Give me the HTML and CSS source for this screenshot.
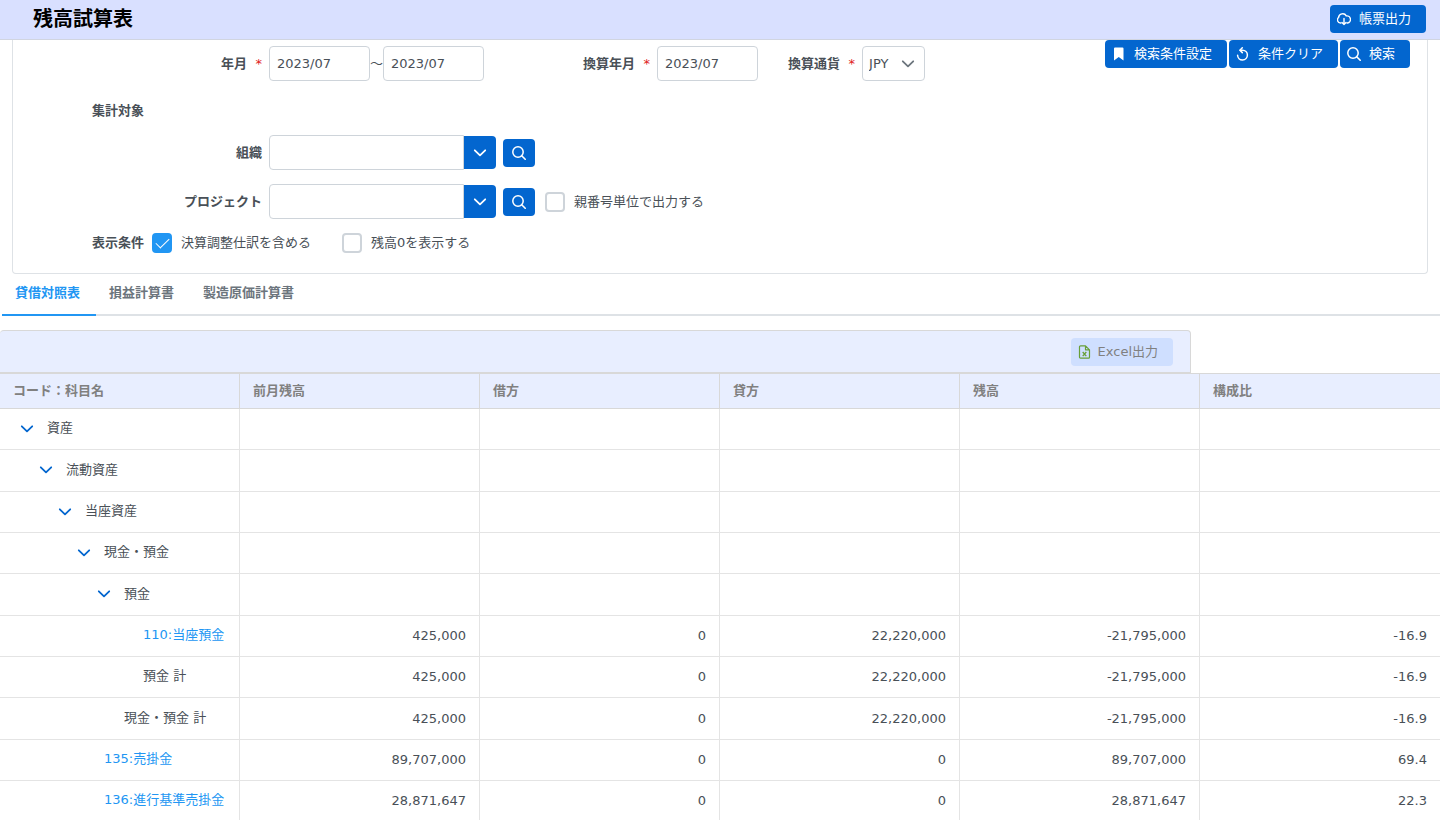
FILE: index.html
```html
<!DOCTYPE html>
<html lang="ja">
<head>
<meta charset="utf-8">
<title>残高試算表</title>
<link rel="stylesheet" href="styles.css">
</head>
<body>
<svg class="sprite" aria-hidden="true">
  <symbol id="chevron" viewBox="0 0 14 14"><path d="M1.800 4.300 7 9.300l5.200-5" fill="none" stroke="currentColor" stroke-width="1.800" stroke-linecap="round" stroke-linejoin="round"/></symbol>
  <symbol id="search" viewBox="0 0 14 14"><circle cx="6" cy="6" r="5.200" fill="none" stroke="currentColor" stroke-width="1.500"/><path d="m9.700 9.700 3.500 3.500" stroke="currentColor" stroke-width="1.600" stroke-linecap="round"/></symbol>
  <symbol id="bookmark" viewBox="0 0 14 14"><path d="M3 .5h7.500a1 1 0 0 1 1 1v12L6.750 10 2 13.500v-12a1 1 0 0 1 1-1z" fill="currentColor"/></symbol>
  <symbol id="undo" viewBox="0 0 14 14"><path d="M4.200 3.200H6.500a4.900 4.900 0 1 1-4.900 5" fill="none" stroke="currentColor" stroke-width="1.500" stroke-linecap="round"/><path d="M6.300 .8 3.900 3.200 6.300 5.600" fill="none" stroke="currentColor" stroke-width="1.500" stroke-linecap="round" stroke-linejoin="round"/></symbol>
  <symbol id="cloud" viewBox="0 0 14 14"><path d="M4 11H3.500A3.100 3.100 0 0 1 1.500 5.600 4.200 4.200 0 0 1 9.300 3.900 3.600 3.600 0 0 1 10.500 11H10" fill="none" stroke="currentColor" stroke-width="1.400" stroke-linecap="round"/><path d="M7 6.500v6M5 10.500l2 2 2-2" fill="none" stroke="currentColor" stroke-width="1.400" stroke-linecap="round" stroke-linejoin="round"/></symbol>
  <symbol id="excel" viewBox="0 0 14 14"><path d="M2.500 .8H7.500l4 4V12.200a1 1 0 0 1-1 1h-8a1 1 0 0 1-1-1V1.800a1 1 0 0 1 1-1zM7.500 .8v4h4" fill="none" stroke="currentColor" stroke-width="1.200" stroke-linejoin="round"/><path d="m4.700 7 3.600 4.200M8.300 7l-3.600 4.200" stroke="currentColor" stroke-width="1.300"/></symbol>
</svg>
<div class="app">
  <header class="topbar">
    <h1 class="title">残高試算表</h1>
    <button class="btn" type="button"><svg class="icon"><use href="#cloud"/></svg>帳票出力</button>
  </header>

  <form class="panel">
    <div class="top-row">
      <div class="field field-main">
        <label class="label label-col" for="from">年月 <span class="req">*</span></label>
        <input class="input month" id="from" type="text" value="2023/07">
        <span class="tilde">～</span>
        <input class="input month" type="text" value="2023/07" aria-label="年月（終了）">
      </div>
      <div class="field field-rate">
        <label class="label" for="rate">換算年月 <span class="req">*</span></label>
        <input class="input month" id="rate" type="text" value="2023/07">
      </div>
      <div class="field">
        <label class="label" for="currency">換算通貨 <span class="req">*</span></label>
        <span class="select-wrap">
          <select class="input select" id="currency"><option>JPY</option></select>
          <svg class="icon select-arrow"><use href="#chevron"/></svg>
        </span>
      </div>
      <div class="actions">
        <button class="btn" type="button"><svg class="icon"><use href="#bookmark"/></svg>検索条件設定</button>
        <button class="btn" type="button"><svg class="icon"><use href="#undo"/></svg>条件クリア</button>
        <button class="btn" type="button"><svg class="icon"><use href="#search"/></svg>検索</button>
      </div>
    </div>

    <h2 class="label section">集計対象</h2>
    <div class="field line">
      <label class="label label-col" for="org">組織</label>
      <div class="combo">
        <input class="input combo-input" id="org" type="text">
        <button class="combo-btn" type="button" aria-label="組織の候補"><svg class="icon"><use href="#chevron"/></svg></button>
      </div>
      <button class="btn btn-icon" type="button" aria-label="組織を検索"><svg class="icon"><use href="#search"/></svg></button>
    </div>
    <div class="field line">
      <label class="label label-col" for="project">プロジェクト</label>
      <div class="combo">
        <input class="input combo-input" id="project" type="text">
        <button class="combo-btn" type="button" aria-label="プロジェクトの候補"><svg class="icon"><use href="#chevron"/></svg></button>
      </div>
      <button class="btn btn-icon" type="button" aria-label="プロジェクトを検索"><svg class="icon"><use href="#search"/></svg></button>
      <label class="check check-parent"><input class="box" type="checkbox">親番号単位で出力する</label>
    </div>
    <div class="options">
      <span class="label">表示条件</span>
      <label class="check"><input class="box" type="checkbox" checked>決算調整仕訳を含める</label>
      <label class="check"><input class="box" type="checkbox">残高0を表示する</label>
    </div>
  </form>

  <nav class="tabs" role="tablist">
    <button class="tab active" type="button" role="tab" aria-selected="true">貸借対照表</button>
    <button class="tab" type="button" role="tab">損益計算書</button>
    <button class="tab" type="button" role="tab">製造原価計算書</button>
  </nav>

  <div class="toolbar">
    <button class="btn btn-excel" type="button"><svg class="icon"><use href="#excel"/></svg>Excel出力</button>
  </div>

  <table class="grid">
    <thead>
      <tr><th>コード：科目名</th><th>前月残高</th><th>借方</th><th>貸方</th><th>残高</th><th>構成比</th></tr>
    </thead>
    <tbody>
      <tr><td class="l0"><button class="toggle" type="button" aria-label="折りたたむ"><svg class="icon"><use href="#chevron"/></svg></button>資産</td><td></td><td></td><td></td><td></td><td></td></tr>
      <tr><td class="l1"><button class="toggle" type="button" aria-label="折りたたむ"><svg class="icon"><use href="#chevron"/></svg></button>流動資産</td><td></td><td></td><td></td><td></td><td></td></tr>
      <tr><td class="l2"><button class="toggle" type="button" aria-label="折りたたむ"><svg class="icon"><use href="#chevron"/></svg></button>当座資産</td><td></td><td></td><td></td><td></td><td></td></tr>
      <tr><td class="l3"><button class="toggle" type="button" aria-label="折りたたむ"><svg class="icon"><use href="#chevron"/></svg></button>現金・預金</td><td></td><td></td><td></td><td></td><td></td></tr>
      <tr><td class="l4"><button class="toggle" type="button" aria-label="折りたたむ"><svg class="icon"><use href="#chevron"/></svg></button>預金</td><td></td><td></td><td></td><td></td><td></td></tr>
      <tr><td class="l5 leaf"><a class="link" href="#">110:当座預金</a></td><td>425,000</td><td>0</td><td>22,220,000</td><td>-21,795,000</td><td>-16.9</td></tr>
      <tr><td class="l5 leaf">預金 計</td><td>425,000</td><td>0</td><td>22,220,000</td><td>-21,795,000</td><td>-16.9</td></tr>
      <tr><td class="l4 leaf">現金・預金 計</td><td>425,000</td><td>0</td><td>22,220,000</td><td>-21,795,000</td><td>-16.9</td></tr>
      <tr><td class="l3 leaf"><a class="link" href="#">135:売掛金</a></td><td>89,707,000</td><td>0</td><td>0</td><td>89,707,000</td><td>69.4</td></tr>
      <tr><td class="l3 leaf"><a class="link" href="#">136:進行基準売掛金</a></td><td>28,871,647</td><td>0</td><td>0</td><td>28,871,647</td><td>22.3</td></tr>
    </tbody>
  </table>
</div>
</body>
</html>
```
FILE: styles.css
```css
* { box-sizing: border-box; }
body {
  margin: 0;
  background: #fff;
  color: #495057;
  font: 13px/20px "DejaVu Sans", "Noto Sans CJK JP", sans-serif;
}
button, input, select { font: inherit; color: inherit; margin: 0; }
button { cursor: pointer; }
.sprite { display: none; }
.app { height: 100vh; overflow: hidden; }
.icon { width: 14px; height: 14px; flex: none; }

.topbar {
  display: flex;
  align-items: center;
  justify-content: space-between;
  height: 40px;
  padding: 0 14px 2px 33px;
  background: #d9e0ff;
  border-bottom: 1px solid #d1d5e0;
}
.title { margin: 0; font-size: 20px; line-height: 32px; font-weight: 700; color: #000; }

.btn {
  display: inline-flex;
  align-items: center;
  gap: 8px;
  height: 28px;
  padding: 0 15px 0 7px;
  border: 0;
  border-radius: 4px;
  background: #0366cf;
  color: #fff;
  white-space: nowrap;
}
.btn-icon { width: 32px; padding: 0; justify-content: center; }
.btn-excel { gap: 6px; background: #cfdfff; color: #808080; }
.btn-excel .icon { color: #689f38; }

.panel {
  margin: 0 12px;
  padding-bottom: 19px;
  border: 1px solid #dee2e6;
  border-top: 0;
  border-radius: 0 0 4px 4px;
}
.top-row { display: flex; align-items: flex-start; }
.field { display: flex; align-items: center; gap: 7px; }
.top-row .field { padding-top: 6px; }
.field-main { margin-right: 99px; }
.field-rate { margin-right: 30px; }
.label { font-weight: 700; white-space: nowrap; }
.label-col { width: 249px; text-align: right; }
.req { margin-left: 4px; font-weight: 400; color: #e02020; }
.tilde { width: 13px; margin: 0 -7px; text-align: center; }
.input {
  height: 35px;
  padding: 0 7px;
  border: 1px solid #ced4da;
  border-radius: 4px;
  background: #fff;
  outline: 0;
}
.month { width: 101px; }
.select-wrap { position: relative; display: flex; }
.select { width: 63px; padding: 0 6px; appearance: none; }
.select-arrow { position: absolute; right: 10px; top: 11px; pointer-events: none; color: #6c757d; }
.actions { display: flex; gap: 2px; margin-left: auto; padding-right: 17px; }

.section { margin: 20px 0 0 79px; font-size: 13px; }
.line { margin-top: 14px; }
.combo { display: flex; align-items: center; }
.combo-input { width: 195px; border-radius: 4px 0 0 4px; }
.combo-btn {
  display: flex;
  align-items: center;
  justify-content: center;
  width: 32px;
  height: 33px;
  padding: 0;
  border: 0;
  border-radius: 0 4px 4px 0;
  background: #0366cf;
  color: #fff;
}
.check { display: flex; align-items: center; gap: 9px; white-space: nowrap; }
.check-parent { margin-left: 3px; }
.box {
  appearance: none;
  width: 20px;
  height: 20px;
  border: 2px solid #ced4da;
  border-radius: 4px;
  background: #fff;
}
.box:checked { border-color: #2196f3; background: #2196f3; }
.box:checked::after {
  content: "";
  display: block;
  width: 6px;
  height: 12px;
  margin: 0 auto;
  border: solid #fff;
  border-width: 0 1px 1px 0;
  outline: 0;
  transform: rotate(45deg);
}
.options { display: flex; align-items: center; gap: 8px; margin: 13px 0 0 79px; min-height: 22px; }
.options .check + .check { margin-left: 23px; }

.tabs { display: flex; margin-left: 2px; border-bottom: 2px solid #dee2e6; }
.tab {
  margin-bottom: -2px;
  padding: 9px 16px 11px 13px;
  border: 0;
  border-bottom: 2px solid transparent;
  background: none;
  color: #6c757d;
  font-weight: 700;
}
.tab.active { color: #2196f3; border-color: #2196f3; }

.toolbar {
  display: flex;
  align-items: center;
  justify-content: flex-end;
  height: 43px;
  margin: 14px 249px 0 0;
  padding-right: 17px;
  border: 1px solid #d8d8d8;
  border-left: 0;
  border-radius: 4px 4px 0 0;
  background: #e8eeff;
}

.grid { width: 100%; table-layout: fixed; border-collapse: separate; border-spacing: 0; }
.grid th {
  height: 36px;
  padding: 0 13px;
  border: solid #d8d8d8;
  border-width: 1px 1px 1px 0;
  background: #e8eeff;
  color: #808080;
  text-align: left;
}
.grid td {
  height: 41px;
  padding: 0 13px;
  border: solid #e4e4e4;
  border-width: 0 1px 1px 0;
  text-align: right;
  white-space: nowrap;
}
.grid tr > :last-child { border-right: 0; }
.grid tbody tr:nth-child(3n+2) td { height: 42px; }
.grid td:first-child { text-align: left; padding: 0 0 2px; }
.grid .l0:first-child { padding-left: 20px; }
.grid .l1:first-child { padding-left: 39px; }
.grid .l2:first-child { padding-left: 58px; }
.grid .l3:first-child { padding-left: 77px; }
.grid .l4:first-child { padding-left: 97px; }
.grid .l3.leaf:first-child { padding-left: 104px; }
.grid .l4.leaf:first-child { padding-left: 124px; }
.grid .l5.leaf:first-child { padding-left: 143px; }
.toggle {
  display: inline-flex;
  margin-right: 13px;
  padding: 0;
  border: 0;
  background: none;
  color: #0366cf;
  vertical-align: middle;
}
.link { color: #2196f3; text-decoration: none; }
```
